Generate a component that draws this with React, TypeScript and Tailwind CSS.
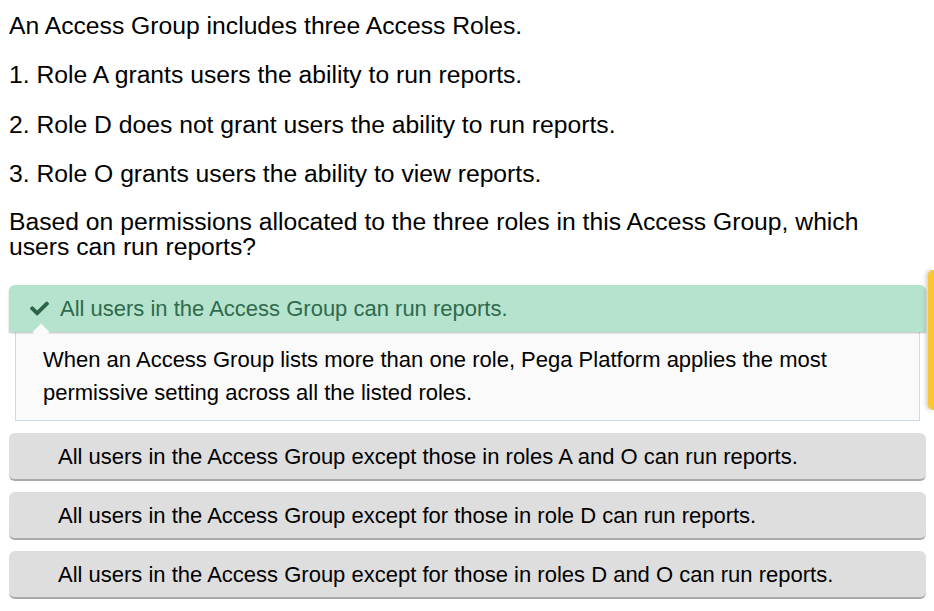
import React from "react";
import { FaCheck } from "react-icons/fa";

const others = [
    "All users in the Access Group except those in roles A and O can run reports.",
    "All users in the Access Group except for those in role D can run reports.",
    "All users in the Access Group except for those in roles D and O can run reports.",
];

const App: React.FC = () => {
    return (
        <div className="relative min-h-[611px] bg-white text-black font-['Liberation_Sans',Arial,sans-serif]">
            <div className="pl-[9px] pr-[8px] pt-[13px]">
                <p className="text-[24.7px] leading-[25px] mb-[24px]">An Access Group includes three Access Roles.</p>
                <p className="text-[24.7px] leading-[25px] mb-[25px]">1. Role A grants users the ability to run reports.</p>
                <p className="text-[24.7px] leading-[25px] mb-[24px]">2. Role D does not grant users the ability to run reports.</p>
                <p className="text-[24.7px] leading-[25px] mb-[23px]">3. Role O grants users the ability to view reports.</p>
                <p className="text-[24.7px] leading-[25px] mb-[26px] pr-[24px]">
                    Based on permissions allocated to the three roles in this Access Group, which users can run reports?
                </p>

                <div className="flex flex-col">
                    <div className="relative flex items-center gap-[11px] h-[47px] pl-[21px] rounded-[6px] rounded-b-none bg-[#b5e3cd] text-[#2f6a4d] shadow-[0_1px_2px_rgba(0,0,0,0.25)]">
                        <FaCheck className="w-[19px] h-[19px] text-[#2b6447]" />
                        <span className="text-[22px]">All users in the Access Group can run reports.</span>
                        <div className="absolute left-[26px] bottom-[-6px] w-[12px] h-[12px] rotate-45 bg-[#fafafa]" />
                    </div>
                    <div className="mx-[6px] border border-t-0 border-[#c9dcec] bg-[#fafafa] px-[27px] pt-[11px] pb-[11px] text-[22px] leading-[33px]">
                        When an Access Group lists more than one role, Pega Platform applies the most permissive setting across all the listed roles.
                    </div>

                    <div className="flex flex-col gap-[11px] mt-[12px]">
                        {others.map((t) => (
                            <div
                                key={t}
                                className="flex items-center h-[48px] pl-[49px] rounded-[6px] bg-[#dedede] border-b-2 border-[#a9a9a9] text-[22px]"
                            >
                                {t}
                            </div>
                        ))}
                    </div>
                </div>
            </div>

            <div className="absolute right-0 top-[270px] w-[6px] h-[140px] rounded-l-[5px] bg-[#fcc536] shadow-[-2px_0_4px_rgba(0,0,0,0.2)]" />
        </div>
    );
};

export default App;
